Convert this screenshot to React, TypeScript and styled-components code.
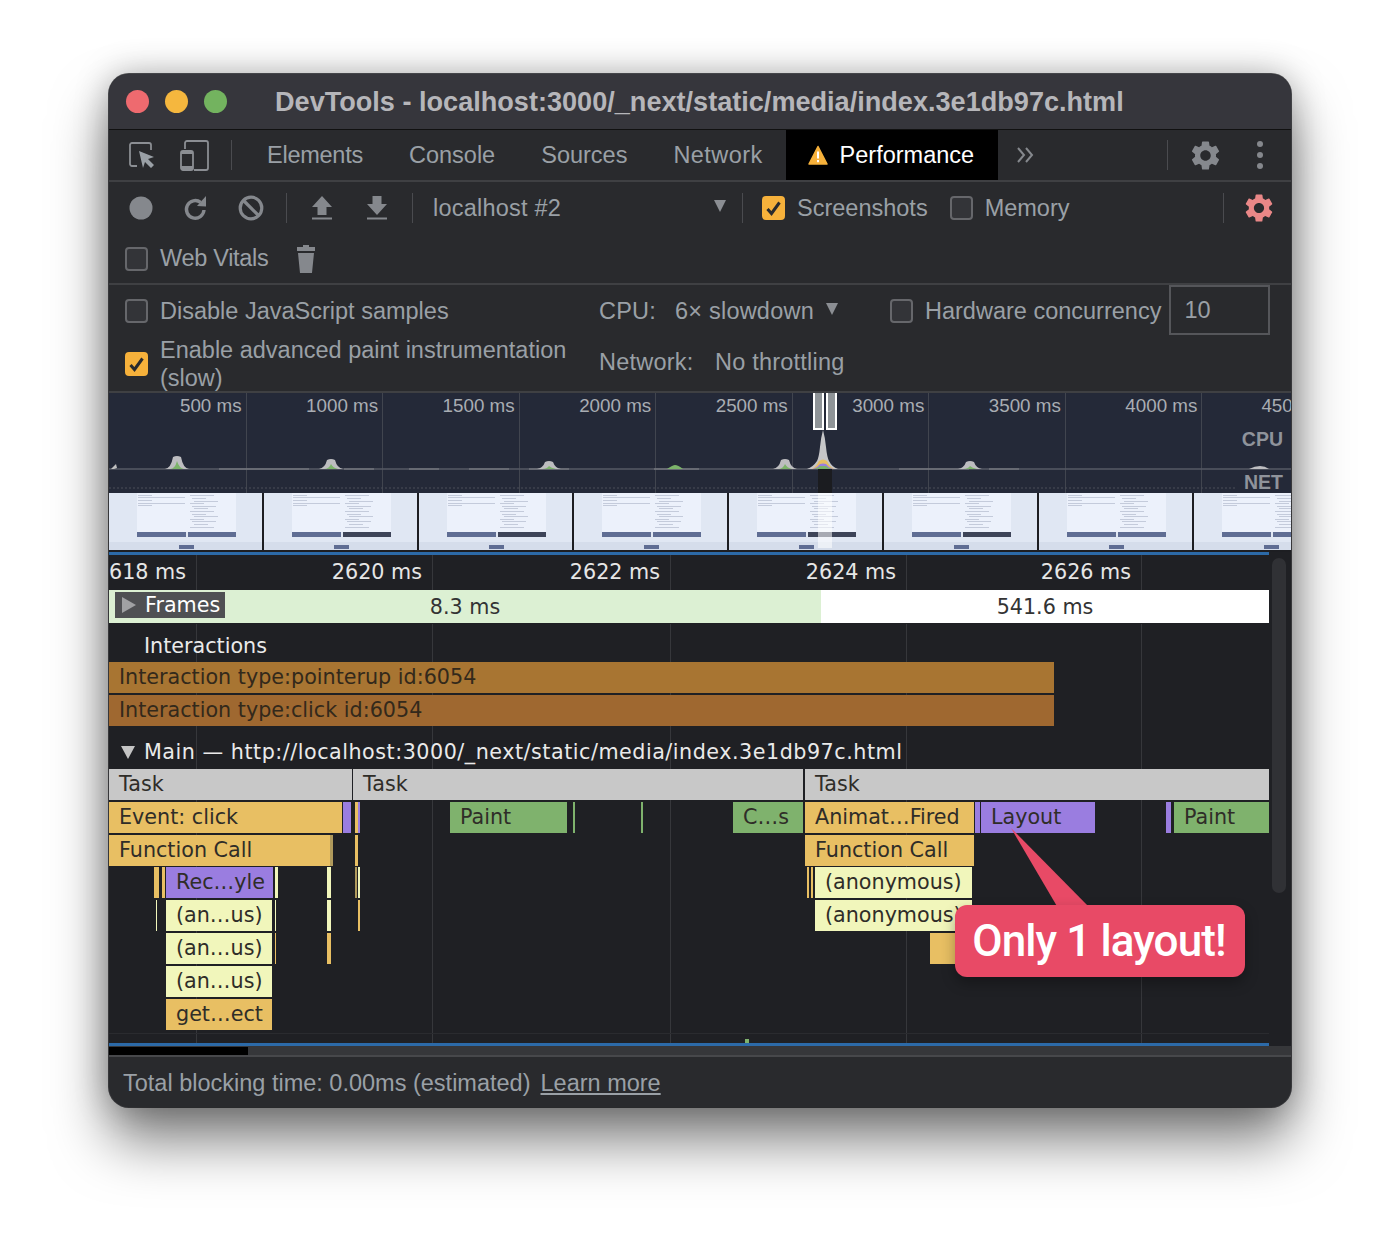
import { MdSettings } from "react-icons/md";
import styled, { createGlobalStyle } from "styled-components";

const GlobalStyle = createGlobalStyle`
  html, body {
    margin: 0;
    background: #fff;
  }
  * {
    box-sizing: border-box;
  }
`;

const Page = styled.div`
  width: 1400px;
  height: 1252px;
  padding: 74px 109px 0;
  overflow: hidden;
  background: #fff;
`;
const Window = styled.div`
  width: 1182px;
  height: 1033px;
  border-radius: 20px;
  overflow: hidden;
  background: #292a2d;
  box-shadow: 0 34px 56px rgba(0, 0, 0, 0.5), 0 0 34px rgba(0, 0, 0, 0.28),
    0 0 0 1px #55565a;
  font-family: "Liberation Sans", Arial, sans-serif;
  color: #9aa0a6;
  font-size: 23.5px;
  display: flex;
  flex-direction: column;
`;
const TitleBar = styled.div`
  height: 56px;
  flex: none;
  background: #36363c;
  border-bottom: 1px solid #111;
  display: flex;
  align-items: center;
  padding-left: 17px;
`;
const Light = styled.span<{ $color: string }>`
  width: 23px;
  height: 23px;
  border-radius: 50%;
  background: ${(p) => p.$color};
  margin-right: 16px;
`;
const Title = styled.div`
  margin-left: 32px;
  font-weight: 700;
  font-size: 27.1px;
  color: #b6b6ba;
  white-space: nowrap;
`;
const TabBar = styled.div`
  height: 52px;
  flex: none;
  border-bottom: 2px solid #3f4043;
  display: flex;
  align-items: stretch;
  padding-left: 20px;
`;
const TabIcon = styled.svg<{ $ml?: number }>`
  align-self: center;
  flex: none;
  margin-left: ${(p) => p.$ml ?? 0}px;
`;
const IconCell = styled.div<{ $w?: number; $pl?: number }>`
  width: ${(p) => p.$w ?? 55}px;
  padding-left: ${(p) => p.$pl ?? 0}px;
  display: flex;
  align-items: center;
  justify-content: center;
  flex: none;
`;
const Sep = styled.span<{ $ml?: number; $mr?: number; $h?: number }>`
  width: 1px;
  height: ${(p) => p.$h ?? 30}px;
  align-self: center;
  background: #4a4b4f;
  flex: none;
  margin-left: ${(p) => p.$ml ?? 0}px;
  margin-right: ${(p) => p.$mr ?? 0}px;
`;
const Tab = styled.div<{ $active?: boolean; $ls?: number }>`
  display: flex;
  align-items: center;
  gap: 12px;
  padding: ${(p) => (p.$active ? "0 24px 0 22px" : "0 23px")};
  letter-spacing: ${(p) => p.$ls ?? 0}px;
  background: ${(p) => (p.$active ? "#000" : "transparent")};
  color: ${(p) => (p.$active ? "#fff" : "#9aa0a6")};
`;
const ToolRow = styled.div<{ $h: number; $line?: boolean; $pl?: number }>`
  height: ${(p) => p.$h}px;
  flex: none;
  display: flex;
  align-items: center;
  padding-left: ${(p) => p.$pl ?? 4}px;
  border-bottom: ${(p) => (p.$line ? "2px solid #3f4043" : "none")};
`;
const Box = styled.span<{ $checked?: boolean }>`
  width: 23px;
  height: 24px;
  border-radius: 4px;
  flex: none;
  display: flex;
  align-items: center;
  justify-content: center;
  border: 2px solid ${(p) => (p.$checked ? "#f6b13b" : "#66676b")};
  background: ${(p) => (p.$checked ? "#f6b13b" : "#333438")};
`;
const CheckLabel = styled.label<{ $ml?: number; $w?: number; $ls?: number }>`
  display: flex;
  align-items: center;
  gap: 12px;
  margin-left: ${(p) => p.$ml ?? 0}px;
  letter-spacing: ${(p) => p.$ls ?? 0}px;
  ${(p) => (p.$w ? `width: ${p.$w}px;` : "")}
  flex: none;
  white-space: nowrap;
`;
const Wrapped = styled.span`
  white-space: normal;
  line-height: 28px;
  width: 420px;
`;
const SelectText = styled.span<{ $w?: number; $ml?: number; $mb?: number }>`
  display: inline-block;
  flex: none;
  white-space: nowrap;
  letter-spacing: 0.22px;
  margin-left: ${(p) => p.$ml ?? 0}px;
  margin-bottom: ${(p) => p.$mb ?? 0}px;
  ${(p) => (p.$w ? `width: ${p.$w}px;` : "")}
`;
const Arrow = styled.span<{ $ml?: number }>`
  flex: none;
  width: 0;
  height: 0;
  margin-left: ${(p) => p.$ml ?? 0}px;
  margin-top: -4px;
  border-left: 6.5px solid transparent;
  border-right: 6.5px solid transparent;
  border-top: 12px solid #8b8e93;
`;
const RightGroup = styled.div`
  margin-left: auto;
  display: flex;
  align-items: center;
  height: 100%;
`;
const Settings = styled.div`
  height: 108px;
  flex: none;
  border-bottom: 2px solid #3f4043;
`;
const SettingRow = styled.div<{ $h: number }>`
  height: ${(p) => p.$h}px;
  display: flex;
  align-items: center;
  padding-left: 16px;
`;
const NumberField = styled.div`
  width: 101px;
  height: 50px;
  margin-left: 8px;
  padding-left: 13px;
  border: 2px solid #55565a;
  display: flex;
  align-items: center;
  align-self: flex-start;
  flex: none;
`;
const Overview = styled.div`
  position: relative;
  height: 159px;
  flex: none;
  background: #242938;
  overflow: hidden;
`;
const OverviewGrid = styled.div`
  position: absolute;
  inset: 0;
  padding-left: 1px;
  display: flex;
`;
const OverviewCell = styled.div`
  width: 136.55px;
  flex: none;
  border-right: 1px solid #41454f;
  text-align: right;
  padding: 2px 4px 0 0;
  font-size: 18.8px;
  color: #a9adb3;
  white-space: nowrap;
`;
const LastCell = styled(OverviewCell)`
  border-right: none;
  text-align: left;
  padding-left: 59px;
`;
const Graph = styled.svg`
  display: block;
  position: absolute;
  left: 0;
  top: 0;
`;
const TrackName = styled.div<{ $top: number; $bg?: boolean }>`
  position: absolute;
  right: 0;
  top: ${(p) => p.$top}px;
  padding: 0 8px 0 8px;
  height: 22px;
  line-height: 22px;
  font-size: 19.5px;
  font-weight: 700;
  color: #8f939b;
  background: ${(p) => (p.$bg ? "#242938" : "transparent")};
`;
const FilmStrip = styled.div`
  position: absolute;
  left: 0;
  top: 100px;
  width: 100%;
  height: 59px;
  display: flex;
  align-items: flex-start;
  gap: 2px;
  background: #1d1e22;
`;
const ThumbSvg = styled.svg`
  display: block;
  flex: none;
`;
const Handle = styled.div<{ $left: number }>`
  position: absolute;
  top: 0;
  left: ${(p) => p.$left}px;
  width: 11px;
  height: 37px;
  background: #8f9498;
  border: 2px solid #fff;
  border-top: none;
`;
const SelectionDark = styled.div`
  position: absolute;
  left: 709px;
  top: 76px;
  width: 14px;
  height: 24px;
  background: #1b1c20;
`;
const SelectionLight = styled.div`
  position: absolute;
  left: 709px;
  top: 100px;
  width: 14px;
  height: 55px;
  background: rgba(255, 255, 255, 0.55);
`;
const BlueLine = styled.div`
  height: 3px;
  width: 100%;
  flex: none;
  background: linear-gradient(to right, #2c6aa8 1160px, #1f2024 1160px);
`;
const Timeline = styled.div`
  position: relative;
  flex: none;
  height: 488px;
  background: #1f2024;
  overflow: hidden;
  font-family: "DejaVu Sans", Verdana, sans-serif;
  font-size: 20.7px;
`;
const GridLines = styled.div`
  position: absolute;
  inset: 0;
`;
const GridLine = styled.div<{ $x: number }>`
  position: absolute;
  top: 0;
  bottom: 0;
  left: ${(p) => p.$x}px;
  width: 1px;
  background: #36373b;
`;
const Scrollbar = styled.div`
  position: absolute;
  left: 1163px;
  top: 3px;
  width: 14px;
  height: 335px;
  border-radius: 7px;
  background: #303135;
`;
const Ruler = styled.div`
  position: relative;
  height: 35px;
  display: flex;
  color: #e6e6e6;
  white-space: nowrap;
`;
const RulerCell = styled.div<{ $w: number }>`
  width: ${(p) => p.$w}px;
  flex: none;
  display: flex;
  justify-content: flex-end;
  align-items: center;
  padding-right: 10px;
  padding-bottom: 2px;
  overflow: hidden;
`;
const FramesRow = styled.div`
  position: relative;
  width: 1160px;
  height: 34px;
  display: flex;
  color: #333;
  border-bottom: 1px solid #1f2024;
`;
const FrameBlock = styled.div<{ $w: number; $bg: string }>`
  width: ${(p) => p.$w}px;
  background: ${(p) => p.$bg};
  display: flex;
  align-items: center;
  justify-content: center;
`;
const FrameChip = styled.div`
  position: absolute;
  left: 6px;
  top: 2px;
  height: 26px;
  width: 110px;
  background: #4f5053;
  color: #fff;
  display: flex;
  align-items: center;
  gap: 9px;
  padding-left: 7px;
`;
const TriRight = styled.span`
  width: 0;
  height: 0;
  border-top: 8px solid transparent;
  border-bottom: 8px solid transparent;
  border-left: 14px solid #a0a1a3;
`;
const TriDown = styled.span`
  width: 0;
  height: 0;
  flex: none;
  border-left: 7px solid transparent;
  border-right: 7px solid transparent;
  border-top: 13px solid #c4c4c4;
  margin: 0 9px 5px 12px;
`;
const TrackHeader = styled.div<{ $h: number; $pl?: number; $ls?: number }>`
  position: relative;
  height: ${(p) => p.$h}px;
  display: flex;
  align-items: flex-end;
  padding-left: ${(p) => p.$pl ?? 35}px;
  padding-bottom: 4px;
  letter-spacing: ${(p) => p.$ls ?? 0}px;
  color: #eaeaea;
  white-space: nowrap;
`;
const InteractionBar = styled.div<{ $bg: string; $mb?: number }>`
  position: relative;
  width: 945px;
  height: 31px;
  margin-bottom: ${(p) => p.$mb ?? 0}px;
  padding-left: 10px;
  line-height: 31px;
  background: ${(p) => p.$bg};
  color: #33291b;
  white-space: nowrap;
`;
const Flame = styled.div`
  position: relative;
  height: 275px;
`;
const Event = styled.div<{ $bg: string; $labelled: boolean }>`
  position: absolute;
  height: 31px;
  padding-left: ${(p) => (p.$labelled ? 10 : 0)}px;
  line-height: 31px;
  background: ${(p) => p.$bg};
  color: #2f2d28;
  white-space: nowrap;
  overflow: hidden;
`;
const FlameFloor = styled.div`
  position: absolute;
  left: 0;
  top: 265px;
  width: 1160px;
  height: 1px;
  background: #2a2b2f;
`;
const Tick = styled.div`
  position: absolute;
  left: 636px;
  top: 271px;
  width: 4px;
  height: 4px;
  background: #7fb26d;
`;
const Callout = styled.div`
  position: absolute;
  left: 846px;
  top: 137px;
  width: 290px;
  height: 72px;
  border-radius: 12px;
  background: #e84a66;
  color: #fff;
  font-family: Roboto, "Liberation Sans", sans-serif;
  font-weight: 500;
  font-size: 44px;
  letter-spacing: -0.9px;
  display: flex;
  align-items: center;
  justify-content: center;
  padding-right: 2px;
  box-shadow: 0 6px 14px rgba(0, 0, 0, 0.3);
`;
const CalloutTail = styled.svg`
  position: absolute;
  left: 900px;
  top: 58px;
`;
const ScrollTrack = styled.div`
  height: 9px;
  flex: none;
  background: #36373a;
  padding-top: 1px;
`;
const ScrollThumb = styled.div`
  width: 139px;
  height: 8px;
  background: #000;
`;
const Footer = styled.div`
  flex: 1;
  border-top: 2px solid #47484b;
  display: flex;
  align-items: center;
  padding: 3px 0 0 14px;
  gap: 10px;
`;
const LearnMore = styled.a`
  color: #9aa0a6;
  text-decoration: underline;
`;

const TASK = "#c8c8c8";
const YELLOW = "#e8bf63";
const PURPLE = "#9a7de0";
const GREEN = "#7fb26d";
const PALE = "#f1f6bb";

type Bar = { row: number; x: number; w: number; color: string; label?: string };

// row 0 is the Task line; x is page pixels, offset by the window's left edge below
const bars: Bar[] = [
  { row: 0, x: 109, w: 243, color: TASK, label: "Task" },
  { row: 0, x: 353, w: 450, color: TASK, label: "Task" },
  { row: 0, x: 805, w: 464, color: TASK, label: "Task" },
  { row: 1, x: 109, w: 233, color: YELLOW, label: "Event: click" },
  { row: 1, x: 343, w: 8, color: PURPLE },
  { row: 1, x: 355, w: 3, color: YELLOW },
  { row: 1, x: 358, w: 2, color: PURPLE },
  { row: 1, x: 450, w: 117, color: GREEN, label: "Paint" },
  { row: 1, x: 573, w: 2, color: GREEN },
  { row: 1, x: 641, w: 2, color: GREEN },
  { row: 1, x: 733, w: 70, color: GREEN, label: "C…s" },
  { row: 1, x: 805, w: 169, color: YELLOW, label: "Animat…Fired" },
  { row: 1, x: 975, w: 5, color: PURPLE },
  { row: 1, x: 981, w: 114, color: PURPLE, label: "Layout" },
  { row: 1, x: 1166, w: 5, color: PURPLE },
  { row: 1, x: 1174, w: 95, color: GREEN, label: "Paint" },
  { row: 2, x: 109, w: 221, color: YELLOW, label: "Function Call" },
  { row: 2, x: 330, w: 3, color: "#b09a5c" },
  { row: 2, x: 355, w: 3, color: YELLOW },
  { row: 2, x: 805, w: 169, color: YELLOW, label: "Function Call" },
  { row: 3, x: 154, w: 5, color: YELLOW },
  { row: 3, x: 162, w: 3, color: YELLOW },
  { row: 3, x: 166, w: 107, color: PURPLE, label: "Rec…yle" },
  { row: 3, x: 275, w: 3, color: PALE },
  { row: 3, x: 327, w: 4, color: PALE },
  { row: 3, x: 355, w: 2, color: "#b09a5c" },
  { row: 3, x: 358, w: 2, color: PALE },
  { row: 3, x: 807, w: 2, color: YELLOW },
  { row: 3, x: 811, w: 2, color: YELLOW },
  { row: 3, x: 815, w: 157, color: PALE, label: "(anonymous)" },
  { row: 4, x: 156, w: 1, color: PALE },
  { row: 4, x: 166, w: 106, color: PALE, label: "(an…us)" },
  { row: 4, x: 275, w: 1, color: PALE },
  { row: 4, x: 327, w: 4, color: PALE },
  { row: 4, x: 358, w: 2, color: YELLOW },
  { row: 4, x: 815, w: 157, color: PALE, label: "(anonymous)" },
  { row: 5, x: 166, w: 106, color: PALE, label: "(an…us)" },
  { row: 5, x: 275, w: 1, color: YELLOW },
  { row: 5, x: 327, w: 4, color: YELLOW },
  { row: 5, x: 930, w: 42, color: YELLOW },
  { row: 6, x: 166, w: 106, color: PALE, label: "(an…us)" },
  { row: 7, x: 166, w: 106, color: YELLOW, label: "get…ect" },
];

const overviewLabels = [
  "500 ms",
  "1000 ms",
  "1500 ms",
  "2000 ms",
  "2500 ms",
  "3000 ms",
  "3500 ms",
  "4000 ms",
];

const rulerCells = [
  { w: 87, label: "618 ms" },
  { w: 236, label: "2620 ms" },
  { w: 238, label: "2622 ms" },
  { w: 236, label: "2624 ms" },
  { w: 235, label: "2626 ms" },
];

const gridXs = [87, 323, 561, 797, 1032];

const peaks: [number, number][] = [
  [68, 12],
  [222, 9],
  [440, 7],
  [676, 9],
  [861, 7],
];

function Check() {
  return (
    <svg width="17" height="17" viewBox="0 0 17 17">
      <path d="M2.5 9l4 4.5L14.5 2.5" fill="none" stroke="#292a2d" strokeWidth="3" />
    </svg>
  );
}

function Thumb({ dark }: { dark?: boolean }) {
  const leftLines = [2, 4, 7, 10, 12];
  const rightLines = [2, 5, 8, 10, 13, 15, 18, 21, 23, 26, 28, 31, 34];
  return (
    <ThumbSvg width="153" height="57" viewBox="0 0 153 57">
      <rect width="153" height="57" fill="#e0e7f3" />
      <rect y="49" width="153" height="8" fill="#d5ddeb" />
      <rect x="28" width="99" height="39" fill="#ecf1fb" />
      {leftLines.map((y, i) => (
        <rect key={y} x="29" y={y} width={i % 2 ? 47 : 14} height="0.6" fill="#aab2c6" />
      ))}
      {rightLines.map((y, i) => (
        <rect key={y} x={81 + (i % 3) * 2} y={y} width={i % 2 ? 14 : 24} height="0.6" fill="#aab2c6" />
      ))}
      <rect x="28" y="39" width="49" height="5" fill="#5f6d93" />
      <rect x="79" y="39" width="48" height="5" fill={dark ? "#3d4458" : "#5f6d93"} />
      <rect x="70" y="52" width="15" height="4" fill="#5f6d93" />
    </ThumbSvg>
  );
}

function CpuGraph() {
  return (
    <Graph width="1182" height="100" viewBox="0 0 1182 100">
      <line x1="0" y1="76" x2="1182" y2="76" stroke="#565a64" strokeWidth="1.5" />
      <line x1="0" y1="95" x2="1182" y2="95" stroke="#4b4f59" strokeWidth="1" strokeDasharray="2 2" />
      <path d="M2 76l5-5 1 4-3 1z" fill="#c0c0c0" />
      <path d="M110 76h90M235 76h30M300 76h30M360 76h40M420 76h40M545 76h45M790 76h70M880 76h30" stroke="#85888d" strokeWidth="1.2" />
      {peaks.map(([x, h]) => (
        <g key={x}>
          <path d={`M${x - 12} 76q6-1 ${12 - 4}-${h}q4-2 8 0q2 ${h - 1} 8 ${h}z`} fill="#bdbdc0" />
          <path d={`M${x - 7} 76q5 0 7-${Math.max(h - 4, 2)}q2 ${Math.max(h - 5, 1)} 7 ${Math.max(h - 4, 2)}z`} fill="#7cb36a" />
        </g>
      ))}
      <path d="M558 76q6-4 8-4q3 0 8 4z" fill="#7cb36a" />
      <path d="M698 76q6-2 10-8q2-4 3-14q1-10 3-17q2 7 3 17q1 10 3 14q3 6 9 8z" fill="#c6c6c8" />
      <path d="M703 76q4-2 7-8q4-3 8 0q2 5 7 8z" fill="#e8bf63" />
      <path d="M704 76q5-2 7-5q3-1 6 0q2 3 7 5z" fill="#9a7de0" />
      <path d="M705 76q4-1 6-3h6q2 2 6 3z" fill="#7cb36a" />
      <path d="M1140 76q6-3 11-3q5 0 9 3z" fill="#bdbdc0" />
    </Graph>
  );
}

export default function App() {
  return (
    <Page>
      <GlobalStyle />
      <Window>
        <TitleBar>
          <Light $color="#ee6a6f" />
          <Light $color="#f5b73e" />
          <Light $color="#73b35f" />
          <Title>DevTools - localhost:3000/_next/static/media/index.3e1db97c.html</Title>
        </TitleBar>
        <TabBar>
          <TabIcon width="26" height="26" viewBox="0 0 26 26">
            <path d="M8 24H3a2 2 0 0 1-2-2V3a2 2 0 0 1 2-2h17a2 2 0 0 1 2 2v5" fill="none" stroke="#8b8e93" strokeWidth="1.8" />
            <path d="M10 9l15 6-6 2 6 6-3 3-6-6-2 6z" fill="#9aa0a6" />
          </TabIcon>
          <TabIcon $ml={24} width="30" height="31" viewBox="0 0 30 31">
            <path d="M6 9V3a2 2 0 0 1 2-2h19a2 2 0 0 1 2 2v25a2 2 0 0 1-2 2H15" fill="none" stroke="#8b8e93" strokeWidth="1.8" />
            <rect x="2" y="11" width="12" height="19" rx="2" fill="none" stroke="#8b8e93" strokeWidth="1.8" />
            <rect x="2" y="26" width="12" height="4" fill="#8b8e93" />
            <rect x="2" y="11" width="12" height="3" fill="#8b8e93" />
          </TabIcon>
          <Sep $ml={22} $mr={12} />
          <Tab $ls={-0.25}>Elements</Tab>
          <Tab>Console</Tab>
          <Tab>Sources</Tab>
          <Tab $ls={0.42}>Network</Tab>
          <Tab $active>
            <svg width="20" height="20" viewBox="0 0 20 20">
              <path d="M10 1.5L19 19H1z" fill="#f6b13b" stroke="#f6b13b" strokeWidth="1.5" strokeLinejoin="round" />
              <rect x="9" y="6.5" width="2" height="7" fill="#fff" />
              <rect x="9" y="15" width="2" height="2.2" fill="#fff" />
            </svg>
            Performance
          </Tab>
          <IconCell $w={54}>
            <svg width="18" height="18" viewBox="0 0 18 18">
              <path d="M2 2l6 7-6 7M10 2l6 7-6 7" fill="none" stroke="#85888d" strokeWidth="2" />
            </svg>
          </IconCell>
          <RightGroup>
            <Sep $mr={20} />
            <MdSettings size={35} color="#85888d" />
            <IconCell $w={68} $pl={6}>
              <svg width="8" height="30" viewBox="0 0 8 30">
                <circle cx="4" cy="4" r="3" fill="#85888d" />
                <circle cx="4" cy="15" r="3" fill="#85888d" />
                <circle cx="4" cy="26" r="3" fill="#85888d" />
              </svg>
            </IconCell>
          </RightGroup>
        </TabBar>
        <ToolRow $h={52}>
          <IconCell>
            <svg width="24" height="24" viewBox="0 0 24 24">
              <circle cx="12" cy="12" r="11.5" fill="#85888d" />
            </svg>
          </IconCell>
          <IconCell>
            <svg width="25" height="25" viewBox="0 0 25 25">
              <path d="M21 14a8.8 8.8 0 1 1-3.4-7.6" fill="none" stroke="#85888d" strokeWidth="3.4" />
              <path d="M14 10l9 .5V0z" fill="#85888d" />
            </svg>
          </IconCell>
          <IconCell>
            <svg width="26" height="26" viewBox="0 0 26 26">
              <circle cx="13" cy="13" r="10.8" fill="none" stroke="#85888d" strokeWidth="3.2" />
              <path d="M5.5 5.5l15 15" stroke="#85888d" strokeWidth="3.2" />
            </svg>
          </IconCell>
          <Sep $ml={8} $mr={7} />
          <IconCell>
            <svg width="22" height="24" viewBox="0 0 22 24">
              <path d="M11 0l10 11h-5.5v8h-9v-8H1zM1 21.5h20v2H1z" fill="#85888d" />
            </svg>
          </IconCell>
          <IconCell>
            <svg width="22" height="24" viewBox="0 0 22 24">
              <path d="M6.5 0h9v8H21L11 19 1 8h5.5zM1 21.5h20v2H1z" fill="#85888d" />
            </svg>
          </IconCell>
          <Sep $ml={8} />
          <SelectText $ml={20} $w={281}>localhost #2</SelectText>
          <Arrow />
          <Sep $ml={16} />
          <CheckLabel $ml={19}>
            <Box $checked><Check /></Box>
            Screenshots
          </CheckLabel>
          <CheckLabel $ml={22}>
            <Box />
            Memory
          </CheckLabel>
          <RightGroup>
            <Sep />
            <IconCell $w={67} $pl={3}>
              <MdSettings size={34} color="#e98787" />
            </IconCell>
          </RightGroup>
        </ToolRow>
        <ToolRow $h={51} $line $pl={16}>
          <CheckLabel $ls={-0.3}>
            <Box />
            Web Vitals
          </CheckLabel>
          <TabIcon $ml={28} width="20" height="28" viewBox="0 0 20 28">
            <path d="M7 0h6v2h6v4H1V2h6zM2 8h16l-2 20H4z" fill="#85888d" />
          </TabIcon>
        </ToolRow>
        <Settings>
          <SettingRow $h={52}>
            <CheckLabel $w={474}>
              <Box />
              Disable JavaScript samples
            </CheckLabel>
            <SelectText $w={76}>CPU:</SelectText>
            <SelectText $w={151}>6× slowdown</SelectText>
            <Arrow />
            <CheckLabel $ml={52}>
              <Box />
              Hardware concurrency
            </CheckLabel>
            <NumberField>10</NumberField>
          </SettingRow>
          <SettingRow $h={54}>
            <CheckLabel $w={474}>
              <Box $checked><Check /></Box>
              <Wrapped>Enable advanced paint instrumentation (slow)</Wrapped>
            </CheckLabel>
            <SelectText $w={116} $mb={4}>Network:</SelectText>
            <SelectText $mb={4}>No throttling</SelectText>
          </SettingRow>
        </Settings>
        <Overview>
          <OverviewGrid>
            {overviewLabels.map((label) => (
              <OverviewCell key={label}>{label}</OverviewCell>
            ))}
            <LastCell>450</LastCell>
          </OverviewGrid>
          <FilmStrip>
            <Thumb />
            <Thumb dark />
            <Thumb dark />
            <Thumb />
            <Thumb dark />
            <Thumb dark />
            <Thumb />
            <Thumb />
          </FilmStrip>
          <CpuGraph />
          <SelectionDark />
          <SelectionLight />
          <Handle $left={704} />
          <Handle $left={717} />
          <TrackName $top={35}>CPU</TrackName>
          <TrackName $top={78} $bg>NET</TrackName>
        </Overview>
        <BlueLine />
        <Timeline>
          <GridLines>
            {gridXs.map((x) => (
              <GridLine key={x} $x={x} />
            ))}
          </GridLines>
          <Scrollbar />
          <Ruler>
            {rulerCells.map((c) => (
              <RulerCell key={c.label} $w={c.w}>{c.label}</RulerCell>
            ))}
          </Ruler>
          <FramesRow>
            <FrameBlock $w={712} $bg="#dcf0d3">8.3 ms</FrameBlock>
            <FrameBlock $w={448} $bg="#fff">541.6 ms</FrameBlock>
            <FrameChip>
              <TriRight />
              Frames
            </FrameChip>
          </FramesRow>
          <TrackHeader $h={38}>Interactions</TrackHeader>
          <InteractionBar $bg="#a87532" $mb={2}>Interaction type:pointerup id:6054</InteractionBar>
          <InteractionBar $bg="#9f6830">Interaction type:click id:6054</InteractionBar>
          <TrackHeader $h={42} $pl={0} $ls={0.51}>
            <TriDown />
            Main — http://localhost:3000/_next/static/media/index.3e1db97c.html
          </TrackHeader>
          <Flame>
            {bars.map((b, i) => (
              <Event
                key={i}
                $bg={b.color}
                $labelled={!!b.label}
                style={{ left: b.x - 109, top: 1 + b.row * 33 - (b.row > 2 ? 1 : 0), width: b.w }}
              >
                {b.label}
              </Event>
            ))}
            <FlameFloor />
            <Tick />
            <CalloutTail width="100" height="90" viewBox="0 0 100 90">
              <path d="M2 2L49 82H81z" fill="#e84a66" />
            </CalloutTail>
            <Callout>Only 1 layout!</Callout>
          </Flame>
        </Timeline>
        <BlueLine />
        <ScrollTrack>
          <ScrollThumb />
        </ScrollTrack>
        <Footer>
          <span>Total blocking time: 0.00ms (estimated)</span>
          <LearnMore>Learn more</LearnMore>
        </Footer>
      </Window>
    </Page>
  );
}
